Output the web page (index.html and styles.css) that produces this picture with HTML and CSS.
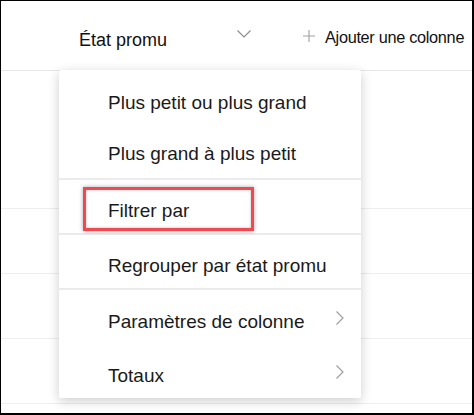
FILE: index.html
```html
<!DOCTYPE html>
<html lang="fr">
<head>
    <meta charset="UTF-8">
    <title>État promu</title>
    <link rel="stylesheet" href="styles.css">
</head>
<body>
    <div class="frame">
        <div class="header">
            <div class="col-name">
                <span>État promu</span>
                <svg class="chevron-down" width="14" height="8" viewBox="0 0 14 8">
                    <path d="M0.5 0.5 L7 7 L13.5 0.5" fill="none" stroke="#8a8a8a" stroke-width="1.1"/>
                </svg>
            </div>
            <div class="add-col">
                <svg width="12" height="12" viewBox="0 0 12 12">
                    <path d="M6 0 V12 M0 6 H12" fill="none" stroke="#a0a0a0" stroke-width="1.1"/>
                </svg>
                <span>Ajouter une colonne</span>
            </div>
        </div>
        <div class="row row-first"></div>
        <div class="row"></div>
        <div class="row"></div>
        <div class="row"></div>

        <!-- menu ouvert sur la colonne -->
        <div class="menu">
            <div class="menu-group group-sort">
                <div class="menu-item">Plus petit ou plus grand</div>
                <div class="menu-item">Plus grand à plus petit</div>
            </div>
            <div class="menu-group group-filter">
                <div class="menu-item highlighted">Filtrer par</div>
            </div>
            <div class="menu-group group-group">
                <div class="menu-item">Regrouper par état promu</div>
            </div>
            <div class="menu-group group-sub">
                <div class="menu-item">
                    <span>Paramètres de colonne</span>
                    <svg width="8" height="14" viewBox="0 0 8 14">
                        <path d="M0.5 0.5 L7 7 L0.5 13.5" fill="none" stroke="#9a9a9a" stroke-width="1.1"/>
                    </svg>
                </div>
                <div class="menu-item">
                    <span>Totaux</span>
                    <svg width="8" height="14" viewBox="0 0 8 14">
                        <path d="M0.5 0.5 L7 7 L0.5 13.5" fill="none" stroke="#9a9a9a" stroke-width="1.1"/>
                    </svg>
                </div>
            </div>
        </div>
    </div>
</body>
</html>
```

FILE: styles.css
```css
body {
    margin: 0;
    font-family: "Liberation Sans", Arial, sans-serif;
    background-color: #fff;
}

.frame {
    position: relative;
    width: 471px;
    height: 412px;
    border: 1px solid #000;
    border-right-width: 2px;
    border-bottom-width: 2px;
    background-color: #fff;
    overflow: hidden;
}

.header {
    height: 69px;
    display: flex;
    align-items: center;
    padding-left: 78px;
    border-bottom: 1px solid #e6e6e6;
    color: #111;
}

.col-name {
    width: 172px;
    display: flex;
    align-items: center;
    justify-content: space-between;
    font-size: 18px;
    padding-top: 10px;
}

.chevron-down {
    margin-top: -14px;
}

.add-col {
    margin-left: 52px;
    display: flex;
    align-items: center;
    gap: 10px;
    font-size: 16.3px;
    letter-spacing: -0.3px;
    padding-top: 4px;
}

.add-col svg {
    margin-top: -4px;
}

.row {
    height: 64px;
    border-bottom: 1px solid #eeeeee;
}

.row-first {
    height: 137px;
}

.menu {
    position: absolute;
    left: 58px;
    top: 69px;
    width: 302px;
    height: 328px;
    background-color: #fff;
    border-radius: 2px;
    box-shadow: 0 3px 12px rgba(0, 0, 0, 0.2);
    color: #1a1a1a;
    font-size: 19px;
}

.menu-group {
    border-bottom: 2px solid #ebebeb;
}

.menu-group:last-child {
    border-bottom: none;
}

.group-sort {
    padding-top: 6px;
}

.menu-item {
    height: 51px;
    display: flex;
    align-items: center;
    justify-content: space-between;
    padding-left: 49px;
    padding-right: 17px;
    box-sizing: border-box;
    padding-top: 2px;
}

.group-filter .menu-item,
.group-group .menu-item {
    height: 53px;
    padding-top: 8px;
}

.group-sub .menu-item {
    height: 54px;
    padding-top: 10px;
}

.group-sub svg {
    margin-top: -8px;
}

.highlighted {
    position: relative;
}

.highlighted::before {
    content: "";
    position: absolute;
    left: 24px;
    top: 7px;
    width: 165px;
    height: 38px;
    border: 3px solid #ef4a51;
    box-shadow: 0 0 4px rgba(0, 0, 0, 0.35), inset 0 0 3px rgba(0, 0, 0, 0.25);
}
```
